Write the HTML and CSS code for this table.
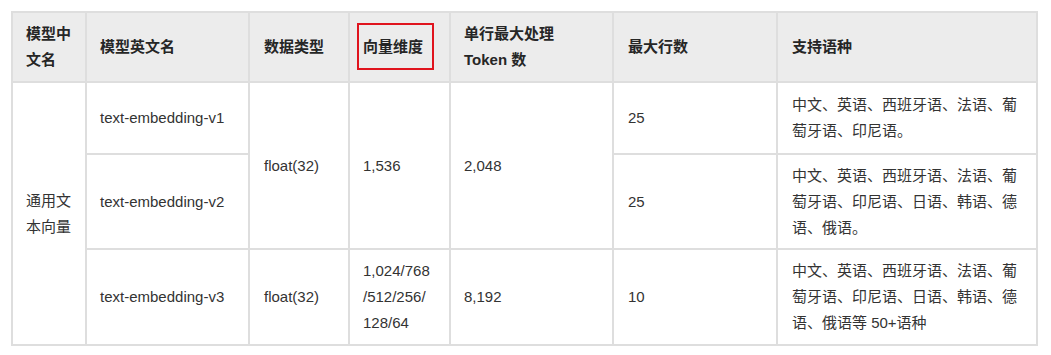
FILE: index.html
```html
<!DOCTYPE html>
<html lang="zh-CN">
<head>
<meta charset="utf-8">
<title>通用文本向量模型</title>
<link rel="stylesheet" href="styles.css">
</head>
<body>
<div class="page">
  <div class="grid" role="table">
    <div class="cell head">模型中<br>文名</div>
    <div class="cell head">模型英文名</div>
    <div class="cell head pl14">数据类型</div>
    <div class="cell head"><span class="marked">向量维度</span></div>
    <div class="cell head">单行最大处理<br>Token 数</div>
    <div class="cell head pl14">最大行数</div>
    <div class="cell head pl14">支持语种</div>

    <div class="cell span3">通用文<br>本向量</div>
    <div class="cell">text-embedding-v1</div>
    <div class="cell span2 pl14">float(32)</div>
    <div class="cell span2">1,536</div>
    <div class="cell span2">2,048</div>
    <div class="cell pl14">25</div>
    <div class="cell pl14 lang">中文、英语、西班牙语、法语、葡萄牙语、印尼语。</div>

    <div class="cell">text-embedding-v2</div>
    <div class="cell pl14">25</div>
    <div class="cell pl14 lang">中文、英语、西班牙语、法语、葡萄牙语、印尼语、日语、韩语、德语、俄语。</div>

    <div class="cell">text-embedding-v3</div>
    <div class="cell pl14">float(32)</div>
    <div class="cell">1,024/768<br>/512/256/<br>128/64</div>
    <div class="cell">8,192</div>
    <div class="cell pl14">10</div>
    <div class="cell pl14 lang">中文、英语、西班牙语、法语、葡萄牙语、印尼语、日语、韩语、德语、俄语等 50+语种</div>
  </div>
</div>
</body>
</html>
```

FILE: styles.css
```css
html, body {
  margin: 0;
  padding: 0;
  background: #ffffff;
}

.page {
  padding: 11px 13px 9px 11px;
  font-family: "Liberation Sans", "Noto Sans CJK SC", sans-serif;
  font-size: 15px;
  line-height: 26px;
  color: #333333;
}

.grid {
  display: grid;
  grid-template-columns: 74px 163px 100px 101px 163px 164px 260px;
  grid-template-rows: 70px 72px 95px 96px;
  width: 1027px;
  box-sizing: border-box;
  border-left: 2px solid #dedede;
  border-top: 2px solid #dedede;
}

.cell {
  box-sizing: border-box;
  display: flex;
  flex-direction: column;
  justify-content: center;
  padding: 0 12px 0 13px;
  border-right: 2px solid #dedede;
  border-bottom: 2px solid #dedede;
  white-space: normal;
}

.pl14 {
  padding-left: 14px;
}

.head {
  background: #ececec;
  font-weight: bold;
  color: #262626;
}

.span2 {
  grid-row: span 2;
}

.span3 {
  grid-row: span 3;
}

.lang {
  padding-right: 10px;
}

.marked {
  position: relative;
  display: inline-block;
  align-self: flex-start;
}

.marked::after {
  content: "";
  position: absolute;
  left: -6px;
  right: -11px;
  top: -11px;
  bottom: -10px;
  border: 2px solid #e0141e;
}
```
